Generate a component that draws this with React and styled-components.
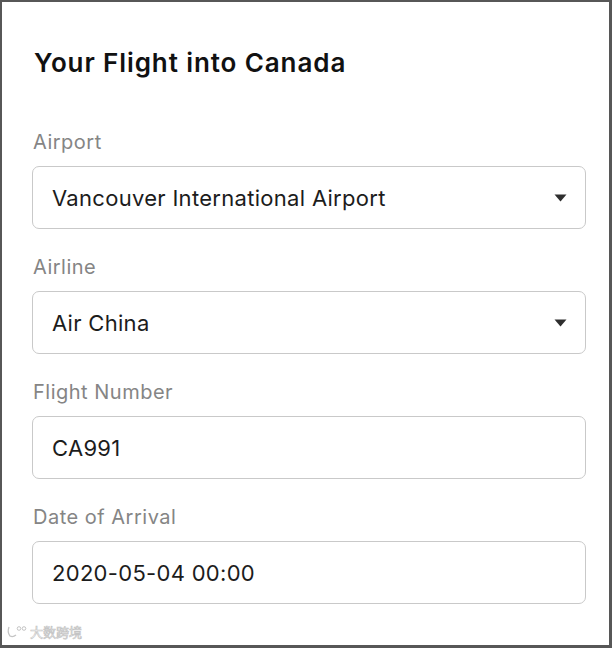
import React from "react";
import styled, { createGlobalStyle } from "styled-components";

const Global = createGlobalStyle`
  html, body { margin: 0; padding: 0; background: #fff; }
  body { font-family: Inter, "Noto Sans", "Liberation Sans", sans-serif; }
  * { box-sizing: border-box; }
`;

const Frame = styled.div`
  position: relative;
  width: 612px;
  height: 648px;
  border-style: solid;
  border-color: #575757;
  border-width: 2px 3px 3px 2px;
  background: #fff;
  padding: 46px 23px 0 30px;
  display: flex;
  flex-direction: column;
`;

const Title = styled.h1`
  margin: 0 0 52px 2px;
  font-size: 26px;
  line-height: 30px;
  font-weight: 600;
  color: #111;
  letter-spacing: 0.9px;
`;

const Fields = styled.div`
  display: flex;
  flex-direction: column;
  gap: 26px;
`;

const Field = styled.div`
  display: flex;
  flex-direction: column;
  gap: 12px;
`;

const Label = styled.div`
  font-size: 20px;
  line-height: 24px;
  color: #858585;
  padding-left: 1px;
  letter-spacing: 0.5px;
`;

const Box = styled.div`
  height: 63px;
  border: 1.5px solid #c9c9c9;
  border-radius: 7px;
  display: flex;
  align-items: center;
  justify-content: space-between;
  padding: 0 18px 0 19px;
  font-size: 22px;
  color: #1c1c1c;
  letter-spacing: 0.3px;
`;

const Caret = styled.svg`
  width: 13px;
  height: 8px;
  flex: none;
`;

const Watermark = styled.div`
  position: absolute;
  left: 4px;
  bottom: 4px;
  display: flex;
  align-items: center;
  gap: 2px;
  font-family: "Noto Sans CJK SC", sans-serif;
  font-size: 13px;
  color: #fff;
  -webkit-text-stroke: 0.7px #c4c4c4;
`;

const fields = [
  { label: "Airport", value: "Vancouver International Airport", select: true },
  { label: "Airline", value: "Air China", select: true },
  { label: "Flight Number", value: "CA991" },
  { label: "Date of Arrival", value: "2020-05-04 00:00" },
];

export default function App() {
  return (
    <>
      <Global />
      <Frame>
        <Title>Your Flight into Canada</Title>
        <Fields>
          {fields.map((f) => (
            <Field key={f.label}>
              <Label>{f.label}</Label>
              <Box>
                <span>{f.value}</span>
                {f.select && (
                  <Caret viewBox="0 0 13 8">
                    <path d="M0.5 0.5 L12.5 0.5 L6.5 7.5 Z" fill="#2e2e2e" />
                  </Caret>
                )}
              </Box>
            </Field>
          ))}
        </Fields>
        <Watermark>
          <svg width="22" height="14" viewBox="0 0 22 14">
            <path d="M3 2 Q1 7 4 11 Q7 12.5 10 10" fill="none" stroke="#c4c4c4" strokeWidth="1.3" />
            <circle cx="13" cy="3.5" r="1.8" fill="none" stroke="#c4c4c4" strokeWidth="1" />
            <circle cx="18" cy="3.5" r="1.8" fill="none" stroke="#c4c4c4" strokeWidth="1" />
          </svg>
          <span>大数跨境</span>
        </Watermark>
      </Frame>
    </>
  );
}
